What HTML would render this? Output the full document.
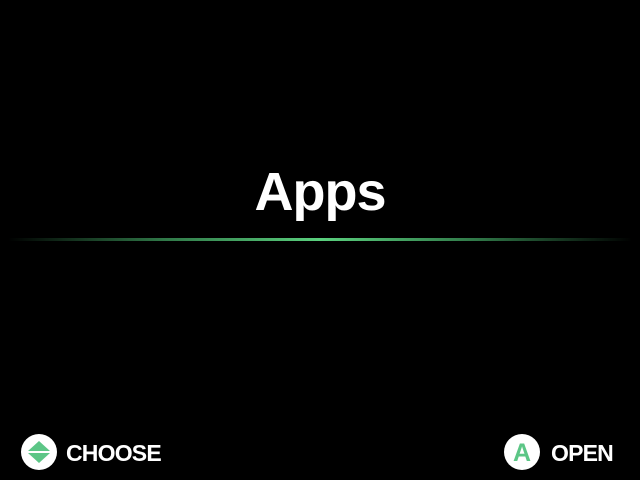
<!DOCTYPE html>
<html><head><style>
html,body{margin:0;padding:0;background:#000;width:640px;height:480px;overflow:hidden;font-family:"Liberation Sans",sans-serif;}
.t{position:absolute;left:0;width:640px;top:160px;text-align:center;color:#fff;font-weight:bold;font-size:54px;letter-spacing:-1px;line-height:64px;}
.line{position:absolute;left:8px;width:624px;top:238px;height:3px;background:linear-gradient(90deg,rgba(80,200,120,0),rgba(80,200,120,0.6) 25%,#5ad07e 50%,rgba(80,200,120,0.6) 75%,rgba(80,200,120,0));}
.c{position:absolute;width:36px;height:36px;border-radius:50%;background:#fff;top:434px;}
.lbl{position:absolute;top:439px;color:#fff;font-weight:bold;font-size:23px;line-height:28px;letter-spacing:-0.8px;}
</style></head><body>
<div class="t">Apps</div>
<div class="line"></div>
<div class="c" style="left:21px"><svg width="36" height="36"><polygon points="18,7 29,17 7,17" fill="#5cc686"/><polygon points="7,19 29,19 18,29" fill="#5cc686"/></svg></div>
<div class="lbl" style="left:66px">CHOOSE</div>
<div class="c" style="left:504px"><svg width="36" height="36"><text x="18" y="27" text-anchor="middle" font-family="Liberation Sans" font-weight="bold" font-size="25" fill="#5cc686">A</text></svg></div>
<div class="lbl" style="left:551px">OPEN</div>
</body></html>
